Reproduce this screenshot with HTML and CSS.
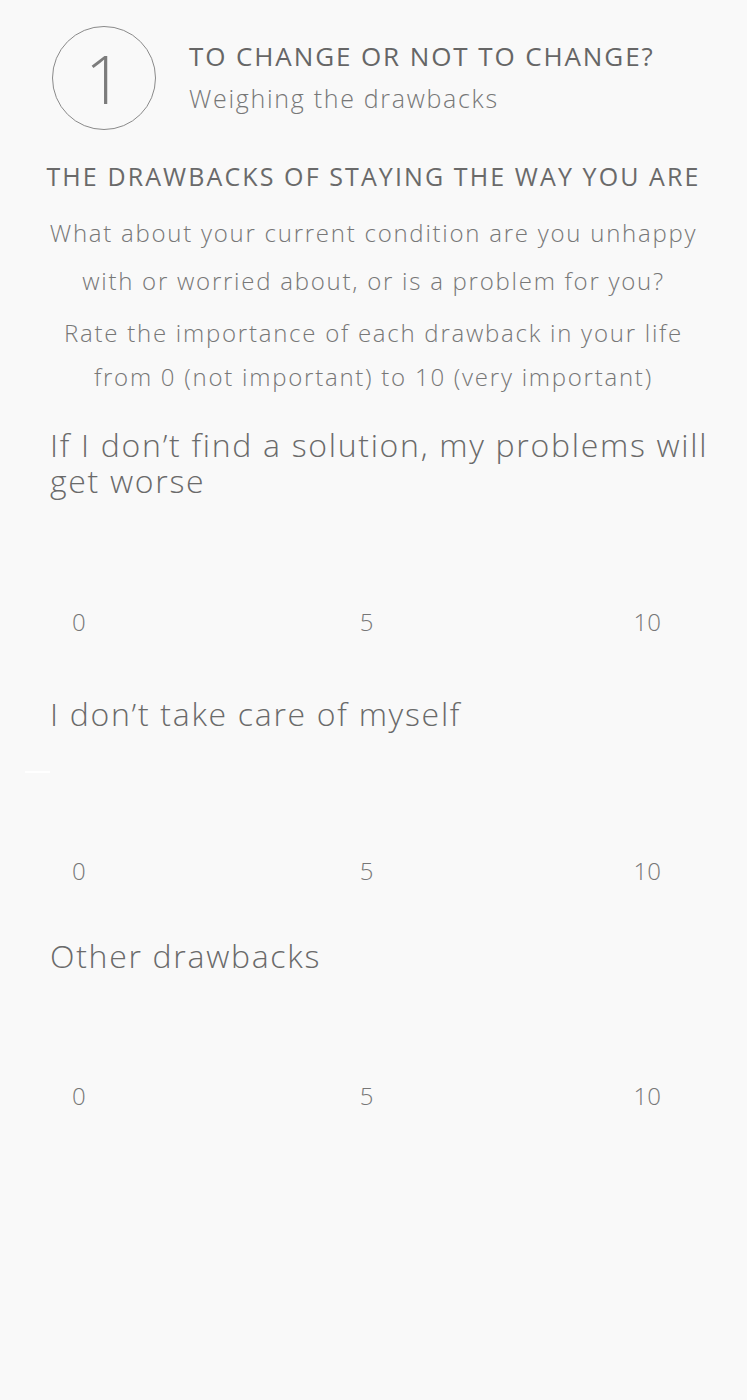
FILE: index.html
```html
<!DOCTYPE html>
<html lang="en">
<head>
<meta charset="utf-8">
<title>To change or not to change?</title>
<link rel="stylesheet" href="styles.css">
</head>
<body>
<main class="page">
  <header class="step-header">
    <div class="step-badge">1</div>
    <div class="step-titles">
      <h1 class="step-title">TO CHANGE OR NOT TO CHANGE?</h1>
      <p class="step-subtitle">Weighing the drawbacks</p>
    </div>
  </header>

  <h2 class="section-title">THE DRAWBACKS OF STAYING THE WAY YOU ARE</h2>
  <p class="intro intro-question">What about your current condition are you unhappy with or worried about, or is a problem for you?</p>
  <p class="intro intro-rate">Rate the importance of each drawback in your life from 0 (not important) to 10 (very important)</p>

  <section class="item item-first">
    <h3 class="item-title">If I don’t find a solution, my problems will get worse</h3>
    <div class="slider"></div>
    <div class="scale"><span class="s-min">0</span><span class="s-mid">5</span><span class="s-max">10</span></div>
  </section>

  <section class="item item-second">
    <h3 class="item-title">I don’t take care of myself</h3>
    <div class="slider"><span class="slider-mark"></span></div>
    <div class="scale"><span class="s-min">0</span><span class="s-mid">5</span><span class="s-max">10</span></div>
  </section>

  <section class="item item-third">
    <h3 class="item-title">Other drawbacks</h3>
    <div class="slider"></div>
    <div class="scale"><span class="s-min">0</span><span class="s-mid">5</span><span class="s-max">10</span></div>
  </section>
</main>
</body>
</html>
```

FILE: styles.css
```css
html, body {
  margin: 0;
  padding: 0;
  background: #f9f9f9;
}
body {
  font-family: "Open Sans", "Lato", sans-serif;
  font-weight: 300;
  color: #6a6a6a;
  min-height: 1400px;
}
.page {
  display: flex;
  flex-direction: column;
}
.step-header {
  display: flex;
  align-items: flex-start;
  padding: 26px 0 0 52px;
}
.step-badge {
  width: 102px;
  height: 102px;
  border: 1px solid #8a8a8a;
  border-radius: 50%;
  display: flex;
  align-items: center;
  justify-content: center;
  font-size: 66px;
  line-height: 1;
  color: #7c7c7c;
  font-weight: 300;
}
.step-titles {
  margin-left: 33px;
  padding-top: 14px;
}
.step-title {
  margin: 0;
  font-size: 26px;
  font-weight: 400;
  line-height: 32px;
  letter-spacing: 1.9px;
  color: #666;
}
.step-subtitle {
  margin: 10px 0 0;
  font-size: 25px;
  line-height: 32px;
  font-weight: 300;
  letter-spacing: 1.7px;
  color: #777;
}
.section-title {
  margin: 30px 0 0;
  text-align: center;
  font-size: 25px;
  font-weight: 400;
  line-height: 32px;
  letter-spacing: 2.1px;
  color: #6a6a6a;
}
.intro {
  margin: 0;
  text-align: center;
  font-size: 24px;
  font-weight: 300;
  letter-spacing: 1.75px;
  color: #777;
  padding: 0 40px;
}
.intro-question {
  margin-top: 17px;
  line-height: 48px;
}
.intro-rate {
  margin-top: 6px;
  line-height: 44px;
}
.item {
  padding: 0 30px 0 50px;
}
.item-title {
  margin: 0;
  font-size: 32px;
  font-weight: 300;
  line-height: 36px;
  letter-spacing: 1.7px;
  color: #6a6a6a;
}
.item-first { margin-top: 28px; }
.item-second { margin-top: 59px; }
.item-third { margin-top: 52px; }
.slider {
  height: 108px;
  position: relative;
}
.item-second .slider { height: 124px; }
.item-third .slider { height: 107px; }
.slider-mark {
  position: absolute;
  left: -25px;
  top: 39px;
  width: 25px;
  height: 2px;
  background: #ffffff;
}
.scale {
  display: grid;
  grid-template-columns: 1fr 1fr 1fr;
  margin: 0 56px 0 22px;
  font-size: 24px;
  line-height: 30px;
  color: #777;
  font-weight: 300;
}
.s-min { text-align: left; }
.s-mid { text-align: center; }
.s-max { text-align: right; }
```
